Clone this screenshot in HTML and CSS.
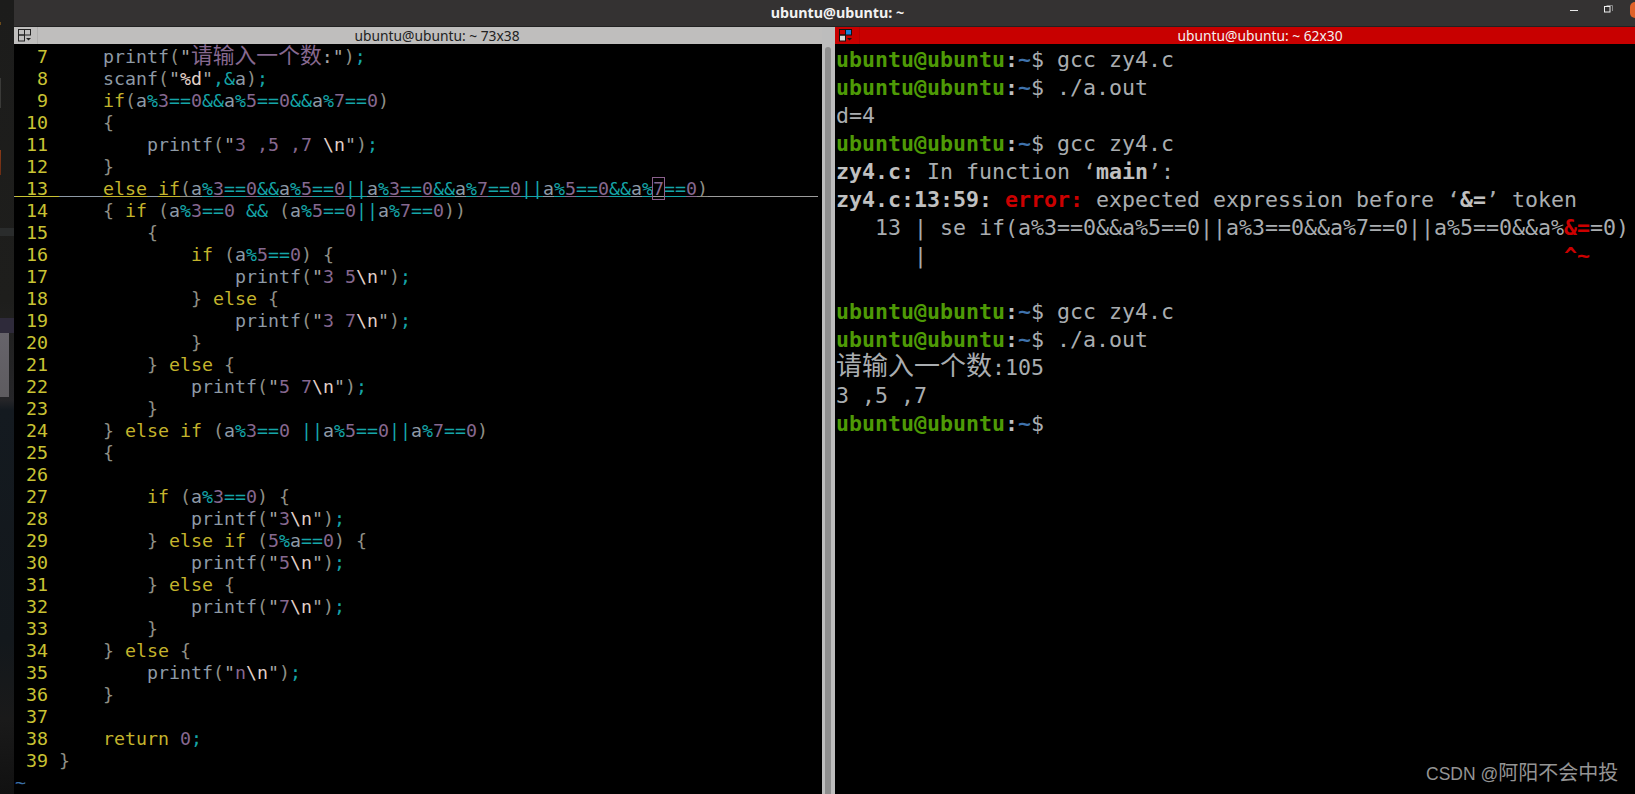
FILE: index.html
```html
<!DOCTYPE html>
<html lang="zh">
<head>
<meta charset="utf-8">
<title>ubuntu@ubuntu: ~</title>
<link rel="stylesheet" href="styles.css">
</head>
<body>
<div class="screen">
  <div class="wall"></div>
  <div class="window">
    <header class="topbar">
      <span class="top-title">ubuntu@ubuntu: ~</span>
      <div class="controls">
        <svg class="ctl" width="9" height="9" viewBox="0 0 9 9"><rect x="0" y="5" width="8" height="1" fill="#e8e8e8"/></svg>
        <svg class="ctl" width="9" height="9" viewBox="0 0 9 9"><path d="M2.5 .5h6v5.500" fill="none" stroke="#888"/><rect x=".5" y="1.500" width="5.500" height="5.500" fill="none" stroke="#eee"/></svg>
        <span class="close"></span>
      </div>
    </header>
    <div class="panes">
      <section class="pane left">
        <div class="ptitle">
          <span class="picon">
            <svg width="13" height="13" viewBox="0 0 13 13"><g fill="none" stroke="#222"><rect x=".5" y=".5" width="6" height="5.5"/><rect x="6.5" y=".5" width="6" height="5.5"/><rect x=".5" y="6" width="6" height="6"/></g><path d="M8 9h5l-2.500 2.500z" fill="#222"/></svg>
          </span>
          <span class="ptext">ubuntu@ubuntu: ~ 73x38</span>
        </div>
        <div class="code">
<div class="row"><span class="ln"> &nbsp;7 </span><span>    printf</span><span class="p">(</span><span class="q">"</span><span class="n cjk">请输入一个数</span><span class="q">:"</span><span class="p">)</span><span class="o">;</span></div>
<div class="row"><span class="ln"> &nbsp;8 </span><span>    scanf</span><span class="p">(</span><span class="q">"</span><span class="e">%d</span><span class="q">"</span><span class="o">,&amp;</span><span>a</span><span class="p">)</span><span class="o">;</span></div>
<div class="row"><span class="ln"> &nbsp;9 </span><span class="k">    if</span><span class="p">(</span><span>a</span><span class="o">%</span><span class="n">3</span><span class="o">==</span><span class="n">0</span><span class="o">&amp;&amp;</span><span>a</span><span class="o">%</span><span class="n">5</span><span class="o">==</span><span class="n">0</span><span class="o">&amp;&amp;</span><span>a</span><span class="o">%</span><span class="n">7</span><span class="o">==</span><span class="n">0</span><span class="p">)</span></div>
<div class="row"><span class="ln"> 10 </span><span class="p">    {</span></div>
<div class="row"><span class="ln"> 11 </span><span>        printf</span><span class="p">(</span><span class="q">"</span><span class="n">3 ,5 ,7 </span><span class="e">\n</span><span class="q">"</span><span class="p">)</span><span class="o">;</span></div>
<div class="row"><span class="ln"> 12 </span><span class="p">    }</span></div>
<div class="row cur"><span class="ln"> 13 </span><span>    </span><span class="k">else</span><span> </span><span class="k">if</span><span class="p">(</span><span>a</span><span class="o">%</span><span class="n">3</span><span class="o">==</span><span class="n">0</span><span class="o">&amp;&amp;</span><span>a</span><span class="o">%</span><span class="n">5</span><span class="o">==</span><span class="n">0</span><span class="o">||</span><span>a</span><span class="o">%</span><span class="n">3</span><span class="o">==</span><span class="n">0</span><span class="o">&amp;&amp;</span><span>a</span><span class="o">%</span><span class="n">7</span><span class="o">==</span><span class="n">0</span><span class="o">||</span><span>a</span><span class="o">%</span><span class="n">5</span><span class="o">==</span><span class="n">0</span><span class="o">&amp;&amp;</span><span>a</span><span class="o">%</span><span class="n cursor">7</span><span class="o">==</span><span class="n">0</span><span class="p">)</span></div>
<div class="row"><span class="ln"> 14 </span><span class="p">    { </span><span class="k">if</span><span> </span><span class="p">(</span><span>a</span><span class="o">%</span><span class="n">3</span><span class="o">==</span><span class="n">0</span><span> </span><span class="o">&amp;&amp;</span><span> </span><span class="p">(</span><span>a</span><span class="o">%</span><span class="n">5</span><span class="o">==</span><span class="n">0</span><span class="o">||</span><span>a</span><span class="o">%</span><span class="n">7</span><span class="o">==</span><span class="n">0</span><span class="p">))</span></div>
<div class="row"><span class="ln"> 15 </span><span class="p">        {</span></div>
<div class="row"><span class="ln"> 16 </span><span class="k">            if</span><span> </span><span class="p">(</span><span>a</span><span class="o">%</span><span class="n">5</span><span class="o">==</span><span class="n">0</span><span class="p">) {</span></div>
<div class="row"><span class="ln"> 17 </span><span>                printf</span><span class="p">(</span><span class="q">"</span><span class="n">3 5</span><span class="e">\n</span><span class="q">"</span><span class="p">)</span><span class="o">;</span></div>
<div class="row"><span class="ln"> 18 </span><span class="p">            } </span><span class="k">else</span><span class="p"> {</span></div>
<div class="row"><span class="ln"> 19 </span><span>                printf</span><span class="p">(</span><span class="q">"</span><span class="n">3 7</span><span class="e">\n</span><span class="q">"</span><span class="p">)</span><span class="o">;</span></div>
<div class="row"><span class="ln"> 20 </span><span class="p">            }</span></div>
<div class="row"><span class="ln"> 21 </span><span class="p">        } </span><span class="k">else</span><span class="p"> {</span></div>
<div class="row"><span class="ln"> 22 </span><span>            printf</span><span class="p">(</span><span class="q">"</span><span class="n">5 7</span><span class="e">\n</span><span class="q">"</span><span class="p">)</span><span class="o">;</span></div>
<div class="row"><span class="ln"> 23 </span><span class="p">        }</span></div>
<div class="row"><span class="ln"> 24 </span><span class="p">    } </span><span class="k">else if</span><span> </span><span class="p">(</span><span>a</span><span class="o">%</span><span class="n">3</span><span class="o">==</span><span class="n">0</span><span> </span><span class="o">||</span><span>a</span><span class="o">%</span><span class="n">5</span><span class="o">==</span><span class="n">0</span><span class="o">||</span><span>a</span><span class="o">%</span><span class="n">7</span><span class="o">==</span><span class="n">0</span><span class="p">)</span></div>
<div class="row"><span class="ln"> 25 </span><span class="p">    {</span></div>
<div class="row"><span class="ln"> 26 </span></div>
<div class="row"><span class="ln"> 27 </span><span class="k">        if</span><span> </span><span class="p">(</span><span>a</span><span class="o">%</span><span class="n">3</span><span class="o">==</span><span class="n">0</span><span class="p">) {</span></div>
<div class="row"><span class="ln"> 28 </span><span>            printf</span><span class="p">(</span><span class="q">"</span><span class="n">3</span><span class="e">\n</span><span class="q">"</span><span class="p">)</span><span class="o">;</span></div>
<div class="row"><span class="ln"> 29 </span><span class="p">        } </span><span class="k">else if</span><span> </span><span class="p">(</span><span class="n">5</span><span class="o">%</span><span>a</span><span class="o">==</span><span class="n">0</span><span class="p">) {</span></div>
<div class="row"><span class="ln"> 30 </span><span>            printf</span><span class="p">(</span><span class="q">"</span><span class="n">5</span><span class="e">\n</span><span class="q">"</span><span class="p">)</span><span class="o">;</span></div>
<div class="row"><span class="ln"> 31 </span><span class="p">        } </span><span class="k">else</span><span class="p"> {</span></div>
<div class="row"><span class="ln"> 32 </span><span>            printf</span><span class="p">(</span><span class="q">"</span><span class="n">7</span><span class="e">\n</span><span class="q">"</span><span class="p">)</span><span class="o">;</span></div>
<div class="row"><span class="ln"> 33 </span><span class="p">        }</span></div>
<div class="row"><span class="ln"> 34 </span><span class="p">    } </span><span class="k">else</span><span class="p"> {</span></div>
<div class="row"><span class="ln"> 35 </span><span>        printf</span><span class="p">(</span><span class="q">"</span><span class="n">n</span><span class="e">\n</span><span class="q">"</span><span class="p">)</span><span class="o">;</span></div>
<div class="row"><span class="ln"> 36 </span><span class="p">    }</span></div>
<div class="row"><span class="ln"> 37 </span></div>
<div class="row"><span class="ln"> 38 </span><span class="k">    return</span><span> </span><span class="n">0</span><span class="o">;</span></div>
<div class="row"><span class="ln"> 39 </span><span class="p">}</span></div>
<div class="row"><span class="tilde">~</span></div>
        </div>
      </section>
      <div class="scroll"><div class="thumb"></div></div>
      <section class="pane right">
        <div class="ptitle red">
          <span class="picon">
            <svg width="13" height="13" viewBox="0 0 13 13"><rect x=".5" y=".5" width="6" height="5.500" fill="#cc0000"/><rect x="6.500" y=".5" width="6" height="5.500" fill="#1b7fd6"/><rect x=".5" y="6" width="6" height="6" fill="#d8d8d8"/><g fill="none" stroke="#111"><rect x=".5" y=".5" width="6" height="5.500"/><rect x="6.500" y=".5" width="6" height="5.500"/><rect x=".5" y="6" width="6" height="6"/></g><path d="M8 9h5l-2.500 2.500z" fill="#111"/></svg>
          </span>
          <span class="ptext">ubuntu@ubuntu: ~ 62x30</span>
        </div>
        <div class="term">
<div class="line"><span class="g">ubuntu@ubuntu</span><b>:</b><span class="bl">~</span>$ gcc zy4.c</div>
<div class="line"><span class="g">ubuntu@ubuntu</span><b>:</b><span class="bl">~</span>$ ./a.out</div>
<div class="line">d=4</div>
<div class="line"><span class="g">ubuntu@ubuntu</span><b>:</b><span class="bl">~</span>$ gcc zy4.c</div>
<div class="line"><b>zy4.c:</b> In function ‘<b>main</b>’:</div>
<div class="line"><b>zy4.c:13:59:</b> <span class="r">error:</span> expected expression before ‘<b>&amp;=</b>’ token</div>
<div class="line">   13 | se if(a%3==0&amp;&amp;a%5==0||a%3==0&amp;&amp;a%7==0||a%5==0&amp;&amp;a%<span class="r">&amp;=</span>=0)</div>
<div class="line">      |                                                 <span class="r">^~</span></div>
<div class="line"></div>
<div class="line"><span class="g">ubuntu@ubuntu</span><b>:</b><span class="bl">~</span>$ gcc zy4.c</div>
<div class="line"><span class="g">ubuntu@ubuntu</span><b>:</b><span class="bl">~</span>$ ./a.out</div>
<div class="line"><span class="cjk2">请输入一个数</span>:105</div>
<div class="line">3 ,5 ,7</div>
<div class="line"><span class="g">ubuntu@ubuntu</span><b>:</b><span class="bl">~</span>$</div>
        </div>
      </section>
    </div>
  </div>
</div>
<div class="mark">CSDN @<span class="mark-cjk">阿阳不会中投</span></div>
</body>
</html>
```
FILE: styles.css
```css
* { box-sizing: border-box; }
html, body { margin: 0; padding: 0; height: 794px; overflow: hidden; background: #000; }

.screen { display: flex; width: 1635px; height: 794px; position: relative; }

.wall {
  flex: 0 0 14px;
  background:
    linear-gradient(#66636a, #5e5c60) 0 333px / 9px 64px no-repeat,
    linear-gradient(#2e2a3a, #2e2a3a) 0 318px / 14px 15px no-repeat,
    linear-gradient(#8a3a18, #6a2c14) 0 150px / 1px 25px no-repeat,
    linear-gradient(#6a4a1a, #6a4a1a) 0 22px / 1px 3px no-repeat,
    linear-gradient(#3a3a38, #3a3a38) 0 78px / 1px 30px no-repeat,
    linear-gradient(#2a2c2c, #2a2c2c) 0 228px / 14px 8px no-repeat,
    linear-gradient(#1c1c1b 0, #1e1e1c 300px, #252528 400px, #141a20 410px, #13181c 640px, #1a1a1a 720px, #111 794px);
}

.window { flex: 1; display: flex; flex-direction: column; min-width: 0; }

.topbar {
  flex: 0 0 27px;
  position: relative;
  background: #343232;
  border-bottom: 1px solid #222;
  display: flex;
  align-items: center;
  justify-content: center;
  padding-left: 26px;
}
.top-title {
  font: 700 14.3px/26px "Noto Sans", "Open Sans", sans-serif;
  color: #f2f2f2;
}
.controls {
  position: absolute;
  top: 5px;
  right: 0;
  display: flex;
  align-items: flex-start;
  gap: 25px;
}
.ctl { display: block; }
.close {
  width: 5px;
  height: 16px;
  margin-left: -8px;
  margin-top: -3px;
  background: #e0622a;
  border-radius: 5px 0 0 5px;
}

.panes { flex: 1; display: flex; min-height: 0; }
.pane { display: flex; flex-direction: column; background: #000; min-width: 0; }
.pane.left { flex: 0 0 808px; }
.pane.right { flex: 0 0 800px; }

.scroll {
  flex: 0 0 13px;
  padding: 20px 4px 0 3px;
  background: #bdbdbd;
}
.thumb { height: 100%; background: #8e8e8e; border-radius: 3px 3px 0 0; }

.ptitle {
  flex: 0 0 17px;
  height: 17px;
  display: flex;
  align-items: center;
  background: #bfbebd;
  color: #222;
}
.ptitle.red { background: #c80000; color: #f4f0f0; }
.picon {
  flex: 0 0 24px;
  height: 17px;
  padding: 2px 0 0 4px;
  border-right: 1px solid #b0afae;
}
.picon svg { display: block; }
.red .picon { flex-basis: 25px; border-right-color: #b80000; }
.ptext {
  flex: 1;
  text-align: center;
  padding-left: 14px;
  font: 400 13.8px/17px "Noto Sans", "Open Sans", sans-serif;
  white-space: nowrap;
}
.red .ptext { padding-left: 25px; }

.code {
  flex: 1;
  padding: 2px 4px 0 1px;
  font: 18.27px/22px "DejaVu Sans Mono", "Noto Sans CJK SC", monospace;
  color: #8e9aa6;
}
.row { height: 22px; white-space: pre; }
.row.cur {
  margin-left: -1px;
  padding-left: 1px;
  background: linear-gradient(#9c9c9c, #9c9c9c) 0 18px / 100% 1px no-repeat;
}
.cur span {
  text-decoration: underline 1px;
  text-decoration-skip-ink: none;
  text-underline-offset: 1px;
}
.ln { color: #c8c233; }
.k { color: #c4b42c; }
.o { color: #15a5a8; }
.n { color: #86688f; }
.p { color: #8f8f86; }
.q { color: #a8a8a8; }
.e { color: #e2d0c8; }
.cjk { font-family: "Noto Sans CJK SC", sans-serif; font-size: 21.8px; line-height: 0; }
.cursor { outline: 1px solid #8a5f8c; text-decoration: none !important; }
.tilde { color: #3a6ea5; }

.term {
  flex: 1;
  padding: 2px 0 0 1px;
  font: 21.6px/28px "DejaVu Sans Mono", "Noto Sans CJK SC", monospace;
  color: #a9adb0;
}
.line { height: 28px; white-space: pre; }
.term b { color: #c0c0c0; font-weight: 700; }
.g { color: #4e9a06; font-weight: 700; }
.bl { color: #3f72ac; font-weight: 700; }
.r { color: #cc0000; font-weight: 700; }
.cjk2 { font-family: "Noto Sans CJK SC", sans-serif; font-size: 26px; line-height: 0; }

.mark {
  position: absolute;
  left: 1426px;
  top: 762px;
  font: 17.5px/24px "Liberation Sans", sans-serif;
  color: #949494;
  white-space: nowrap;
}
.mark-cjk { font: 20px/0 "Noto Sans CJK SC", sans-serif; }
```
